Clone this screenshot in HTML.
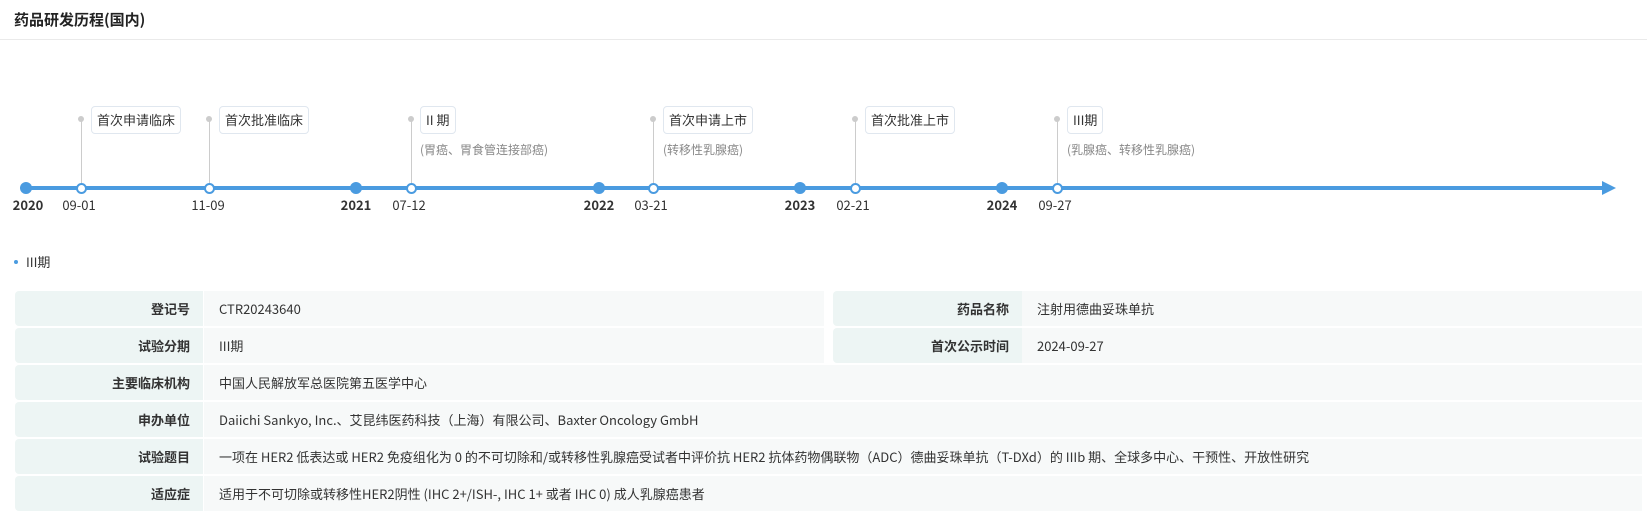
<!DOCTYPE html>
<html><head><meta charset="utf-8"><style>
*{margin:0;padding:0;box-sizing:border-box}
body{width:1647px;height:518px;background:#fff;font-family:"Noto Sans CJK SC","Liberation Sans",sans-serif;color:#333;position:relative;overflow:hidden}
.a{position:absolute;white-space:nowrap}
.title{left:14px;top:10px;font-size:15px;font-weight:bold;color:#222;line-height:20px}
.hr{left:0;top:39px;width:1647px;height:1px;background:#eaeaea}
.line{left:26px;top:186px;width:1578px;height:4px;background:#4a9be0}
.arrow{left:1602px;top:181px;width:0;height:0;border-top:7px solid transparent;border-bottom:7px solid transparent;border-left:14px solid #4a9be0}
.yd{width:12px;height:12px;border-radius:50%;background:#4a9be0;top:182px}
.hd{width:11px;height:11px;border-radius:50%;background:#fff;border:2.5px solid #4a9be0;top:182.5px}
.stem{width:1px;background:#ccc;top:119px;height:68px}
.gd{width:6px;height:6px;border-radius:50%;background:#ccc;top:116px}
.box{top:106px;height:28px;border:1px solid #e0e7ef;border-radius:4px;padding:0 5px;font-size:13px;line-height:26px;background:#fff}
.sub{top:142px;font-size:12px;color:#888;line-height:16px}
.yl{top:197px;font-size:13px;line-height:16px;transform:translateX(-50%)}
.yl b{font-weight:bold}
.dot{left:14px;top:260px;width:4px;height:4px;border-radius:50%;background:#4a9be0}
.ph{left:26px;top:253px;font-size:13px;line-height:18px}
.l{background:#edf5f4;border-radius:4px 0 0 4px;font-size:13px;text-align:right;padding-right:13px;line-height:35px;height:35px}
.l b{font-weight:bold}
.v{background:#f7f9f9;font-size:13px;padding-left:15px;line-height:35px;height:35px}
</style></head><body>
<div class="a title">药品研发历程(国内)</div>
<div class="a hr"></div>

<div class="a line"></div>
<div class="a arrow"></div>

<div class="a yd" style="left:20px"></div>
<div class="a yd" style="left:350px"></div>
<div class="a yd" style="left:593px"></div>
<div class="a yd" style="left:794px"></div>
<div class="a yd" style="left:996px"></div>

<div class="a stem" style="left:81px"></div><div class="a gd" style="left:78px"></div>
<div class="a stem" style="left:209px"></div><div class="a gd" style="left:206px"></div>
<div class="a stem" style="left:411px"></div><div class="a gd" style="left:408px"></div>
<div class="a stem" style="left:653px"></div><div class="a gd" style="left:650px"></div>
<div class="a stem" style="left:855px"></div><div class="a gd" style="left:852px"></div>
<div class="a stem" style="left:1057px"></div><div class="a gd" style="left:1054px"></div>

<div class="a hd" style="left:76px"></div>
<div class="a hd" style="left:204px"></div>
<div class="a hd" style="left:406px"></div>
<div class="a hd" style="left:648px"></div>
<div class="a hd" style="left:850px"></div>
<div class="a hd" style="left:1052px"></div>

<div class="a box" style="left:91px">首次申请临床</div>
<div class="a box" style="left:219px">首次批准临床</div>
<div class="a box" style="left:420px">II 期</div>
<div class="a sub" style="left:420px">(胃癌、胃食管连接部癌)</div>
<div class="a box" style="left:663px">首次申请上市</div>
<div class="a sub" style="left:663px">(转移性乳腺癌)</div>
<div class="a box" style="left:865px">首次批准上市</div>
<div class="a box" style="left:1067px">III期</div>
<div class="a sub" style="left:1067px">(乳腺癌、转移性乳腺癌)</div>

<div class="a yl" style="left:28px"><b>2020</b></div>
<div class="a yl" style="left:79px">09-01</div>
<div class="a yl" style="left:208px">11-09</div>
<div class="a yl" style="left:356px"><b>2021</b></div>
<div class="a yl" style="left:409px">07-12</div>
<div class="a yl" style="left:599px"><b>2022</b></div>
<div class="a yl" style="left:651px">03-21</div>
<div class="a yl" style="left:800px"><b>2023</b></div>
<div class="a yl" style="left:853px">02-21</div>
<div class="a yl" style="left:1002px"><b>2024</b></div>
<div class="a yl" style="left:1055px">09-27</div>

<div class="a dot"></div>
<div class="a ph">III期</div>

<div class="a l" style="left:15px;top:291px;width:188px"><b>登记号</b></div>
<div class="a v" style="left:204px;top:291px;width:620px">CTR20243640</div>
<div class="a l" style="left:833px;top:291px;width:189px"><b>药品名称</b></div>
<div class="a v" style="left:1022px;top:291px;width:620px">注射用德曲妥珠单抗</div>

<div class="a l" style="left:15px;top:328px;width:188px"><b>试验分期</b></div>
<div class="a v" style="left:204px;top:328px;width:620px">III期</div>
<div class="a l" style="left:833px;top:328px;width:189px"><b>首次公示时间</b></div>
<div class="a v" style="left:1022px;top:328px;width:620px">2024-09-27</div>

<div class="a l" style="left:15px;top:365px;width:188px"><b>主要临床机构</b></div>
<div class="a v" style="left:204px;top:365px;width:1438px">中国人民解放军总医院第五医学中心</div>

<div class="a l" style="left:15px;top:402px;width:188px"><b>申办单位</b></div>
<div class="a v" style="left:204px;top:402px;width:1438px">Daiichi Sankyo, Inc.、艾昆纬医药科技（上海）有限公司、Baxter Oncology GmbH</div>

<div class="a l" style="left:15px;top:439px;width:188px"><b>试验题目</b></div>
<div class="a v" style="left:204px;top:439px;width:1438px">一项在 HER2 低表达或 HER2 免疫组化为 0 的不可切除和/或转移性乳腺癌受试者中评价抗 HER2 抗体药物偶联物（ADC）德曲妥珠单抗（T-DXd）的 IIIb 期、全球多中心、干预性、开放性研究</div>

<div class="a l" style="left:15px;top:476px;width:188px"><b>适应症</b></div>
<div class="a v" style="left:204px;top:476px;width:1438px">适用于不可切除或转移性HER2阴性 (IHC 2+/ISH-, IHC 1+ 或者 IHC 0) 成人乳腺癌患者</div>
</body></html>
